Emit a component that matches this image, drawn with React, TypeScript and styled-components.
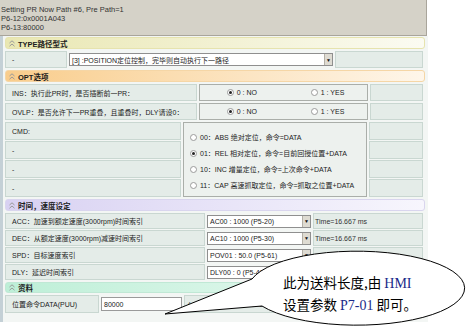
import styled, { createGlobalStyle } from "styled-components";

const GlobalStyle = createGlobalStyle`
  html, body {
    margin: 0;
    padding: 0;
    background: #ffffff;
  }
  body {
    font-family: "Liberation Sans", "Noto Sans CJK SC", sans-serif;
    font-size: 7px;
    color: #222;
  }
  * {
    box-sizing: border-box;
  }
`;

type Tone = "yellow" | "orange" | "violet" | "mint";

const tones: Record<Tone, { from: string; to: string; line: string }> = {
  yellow: { from: "#e9e7b2", to: "#fbfbf2", line: "#e6e3ae" },
  orange: { from: "#f9cd8c", to: "#fef6ea", line: "#f5d6a6" },
  violet: { from: "#d8d1f2", to: "#f7f6fd", line: "#d9d5ee" },
  mint: { from: "#bdefd7", to: "#effaf5", line: "#c0e8d5" },
};

const Page = styled.div`
  position: relative;
  width: 469px;
  height: 331px;
  overflow: hidden;
`;

const InfoBar = styled.div`
  width: 427px;
  height: 36px;
  padding: 5px 0 0 1px;
  background: #d5d2c8;
  border-right: 1px solid #a9a59b;
  border-bottom: 1px solid #a9a59b;
  font-size: 7.5px;
  line-height: 9px;
  color: #333;
`;

const Form = styled.div`
  width: 428px;
  padding: 1px 3px 9px 2px;
  border-left: 3px solid #c4d0d6;
  background: #f3f6f4;
  display: flex;
  flex-direction: column;
  gap: 2px;
`;

const Header = styled.div<{ $tone: Tone; $h?: number }>`
  height: ${(p) => p.$h ?? 12}px;
  display: flex;
  align-items: center;
  gap: 3px;
  padding-left: 3px;
  border: 1px solid ${(p) => tones[p.$tone].line};
  border-radius: 3px;
  background: linear-gradient(
    to right,
    ${(p) => tones[p.$tone].from},
    ${(p) => tones[p.$tone].to}
  );
  font-size: 7.5px;
  font-weight: bold;
  color: #1c1c1c;
`;

const Row = styled.div<{ $h: number }>`
  display: flex;
  gap: 2px;
  height: ${(p) => p.$h}px;
  margin-right: 2px;
`;

const RowGroup = styled.div`
  display: flex;
  flex-direction: column;
  gap: 1px;
`;

const Cell = styled.div<{ $w?: number }>`
  ${(p) => (p.$w ? `width: ${p.$w}px; flex: none;` : "flex: 1;")}
  display: flex;
  align-items: center;
  padding-left: 6px;
  background: #e4ece8;
  border: 1px solid #c9d7d1;
  white-space: nowrap;
  overflow: hidden;
`;

const Select = styled.div<{ $w: number; $h: number }>`
  align-self: center;
  flex: none;
  width: ${(p) => p.$w}px;
  height: ${(p) => p.$h}px;
  display: flex;
  align-items: center;
  padding-left: 2px;
  background: #ffffff;
  border: 1px solid #8f8f8f;
  white-space: nowrap;
  overflow: hidden;
`;

const DropButton = styled.span`
  margin-left: auto;
  flex: none;
  width: 8px;
  height: 100%;
  display: flex;
  align-items: center;
  justify-content: center;
  background: #dedbd2;
  border-left: 1px solid #b3afa6;
  font-size: 5px;
  color: #111;
`;

const TextInput = styled.div`
  align-self: center;
  flex: none;
  width: 81px;
  height: 14px;
  display: flex;
  align-items: center;
  padding-left: 2px;
  background: #ffffff;
  border: 1px solid #9a9a9a;
`;

const RadioBox = styled.div<{ $w: number; $column?: boolean }>`
  flex: none;
  width: ${(p) => p.$w}px;
  display: flex;
  flex-direction: ${(p) => (p.$column ? "column" : "row")};
  align-items: ${(p) => (p.$column ? "flex-start" : "center")};
  justify-content: center;
  gap: ${(p) => (p.$column ? "7px" : "0")};
  padding: ${(p) => (p.$column ? "3px 0 0 6px" : "0 0 0 4px")};
  background: #edf1ee;
  border: 1px solid #aaaea9;
  ${(p) => (p.$column ? "grid-column: 2; grid-row: 1 / -1;" : "")}
`;

const RadioItem = styled.label<{ $w?: number }>`
  display: flex;
  align-items: center;
  gap: 3px;
  ${(p) => (p.$w ? `width: ${p.$w}px;` : "")}
  white-space: nowrap;
  line-height: 9px;
`;

const Dot = styled.span<{ $on?: boolean }>`
  flex: none;
  width: 7px;
  height: 7px;
  border-radius: 50%;
  border: 1px solid #9b9b9b;
  background: #fff;
  display: flex;
  align-items: center;
  justify-content: center;
  &::after {
    content: "";
    width: 3px;
    height: 3px;
    border-radius: 50%;
    background: ${(p) => (p.$on ? "#222" : "transparent")};
  }
`;

const CmdBlock = styled.div`
  display: grid;
  grid-template-columns: 176px 184px 1fr;
  grid-template-rows: repeat(4, 18px);
  gap: 1px 2px;
  margin-right: 2px;
`;

const Note = styled.span`
  padding-left: 1px;
  color: #333;
`;

const Callout = styled.div`
  position: absolute;
  left: 0;
  top: 0;
  width: 469px;
  height: 331px;
  pointer-events: none;
`;

const CalloutText = styled.div`
  position: absolute;
  left: 283px;
  top: 272px;
  font-family: "Noto Sans CJK SC", sans-serif;
  font-size: 13.5px;
  line-height: 21px;
  color: #000;
  white-space: nowrap;
`;

const Latin = styled.span`
  font-family: "Liberation Serif", serif;
  font-size: 14px;
  color: #1b2a8a;
`;

function Chevrons() {
  return (
    <svg width="6" height="7" viewBox="0 0 6 7">
      <polyline points="0.5,3 3,0.8 5.5,3" fill="none" stroke="#9a9a9a" strokeWidth="1" />
      <polyline points="0.5,6.2 3,4 5.5,6.2" fill="none" stroke="#9a9a9a" strokeWidth="1" />
    </svg>
  );
}

function Section({ tone, title, h }: { tone: Tone; title: string; h?: number }) {
  return (
    <Header $tone={tone} $h={h}>
      <Chevrons />
      {title}
    </Header>
  );
}

function Choice({ label, on, w }: { label: string; on?: boolean; w?: number }) {
  return (
    <RadioItem $w={w}>
      <Dot $on={on} />
      {label}
    </RadioItem>
  );
}

const cmdOptions = [
  "00：ABS 绝对定位，命令=DATA",
  "01：REL 相对定位，命令=目前回授位置+DATA",
  "10：INC 增量定位，命令=上次命令+DATA",
  "11：CAP 高速抓取定位，命令=抓取之位置+DATA",
];

const timeRows = [
  { label: "ACC：加速到额定速度(3000rpm)时间索引", value: "AC00 : 1000 (P5-20)", note: "Time=16.667 ms" },
  { label: "DEC：从额定速度(3000rpm)减速时间索引", value: "AC10 : 1000 (P5-30)", note: "Time=16.667 ms" },
  { label: "SPD：目标速度索引", value: "POV01 : 50.0 (P5-61)", note: "" },
  { label: "DLY：延迟时间索引", value: "DLY00 : 0 (P5-40)", note: "" },
];

export default function App() {
  return (
    <Page>
      <GlobalStyle />
      <InfoBar>
        <div>Setting PR Now Path #6, Pre Path=1</div>
        <div>P6-12:0x0001A043</div>
        <div>P6-13:80000</div>
      </InfoBar>
      <Form>
        <Section tone="yellow" title="TYPE路径型式" />
        <Row $h={17}>
          <Cell $w={62}>-</Cell>
          <Select $w={264} $h={13}>
            [3] :POSITION定位控制，完毕则自动执行下一路径
            <DropButton>▼</DropButton>
          </Select>
          <Cell />
        </Row>

        <Section tone="orange" title="OPT选项" />
        <Row $h={17}>
          <Cell $w={192}>INS：执行此PR时，是否插断前一PR：</Cell>
          <RadioBox $w={169}>
            <Choice label="0 : NO" on w={84} />
            <Choice label="1 : YES" />
          </RadioBox>
          <Cell />
        </Row>
        <Row $h={17}>
          <Cell $w={192}>OVLP：是否允许下一PR重叠，且重叠时，DLY请设0：</Cell>
          <RadioBox $w={169}>
            <Choice label="0 : NO" on w={84} />
            <Choice label="1 : YES" />
          </RadioBox>
          <Cell />
        </Row>
        <CmdBlock>
          <Cell style={{ gridColumn: 1, gridRow: 1 }}>CMD:</Cell>
          <Cell style={{ gridColumn: 1, gridRow: 2 }}>-</Cell>
          <Cell style={{ gridColumn: 1, gridRow: 3 }}>-</Cell>
          <Cell style={{ gridColumn: 1, gridRow: 4 }}>-</Cell>
          <RadioBox $w={184} $column>
            {cmdOptions.map((o, i) => (
              <Choice key={o} label={o} on={i === 1} />
            ))}
          </RadioBox>
          {[1, 2, 3, 4].map((r) => (
            <Cell key={r} style={{ gridColumn: 3, gridRow: r }} />
          ))}
        </CmdBlock>

        <Section tone="violet" title="时间，速度设定" />
        <RowGroup>
          {timeRows.map((t) => (
            <Row $h={16} key={t.label}>
              <Cell $w={200}>{t.label}</Cell>
              <Select $w={104} $h={13}>
                {t.value}
                <DropButton>▼</DropButton>
              </Select>
              <Cell style={{ paddingLeft: 0 }}>
                <Note>{t.note}</Note>
              </Cell>
            </Row>
          ))}
        </RowGroup>

        <Section tone="mint" title="资料" h={11} />
        <Row $h={18}>
          <Cell $w={94}>位置命令DATA(PUU)</Cell>
          <TextInput>80000</TextInput>
          <Cell style={{ paddingLeft: 3 }}>(-2147483648 ~ 2147483647)</Cell>
        </Row>
      </Form>

      <Callout>
        <svg width="469" height="331" viewBox="0 0 469 331">
          <path
            d="M 252 279 L 165 314 L 262 306 A 108 37 0 1 0 252 279 Z"
            fill="#ffffff"
            stroke="#000000"
            strokeWidth="1"
          />
        </svg>
        <CalloutText>
          <div>
            此为送料长度,由 <Latin>HMI</Latin>
          </div>
          <div>
            设置参数 <Latin>P7-01</Latin> 即可。
          </div>
        </CalloutText>
      </Callout>
    </Page>
  );
}
